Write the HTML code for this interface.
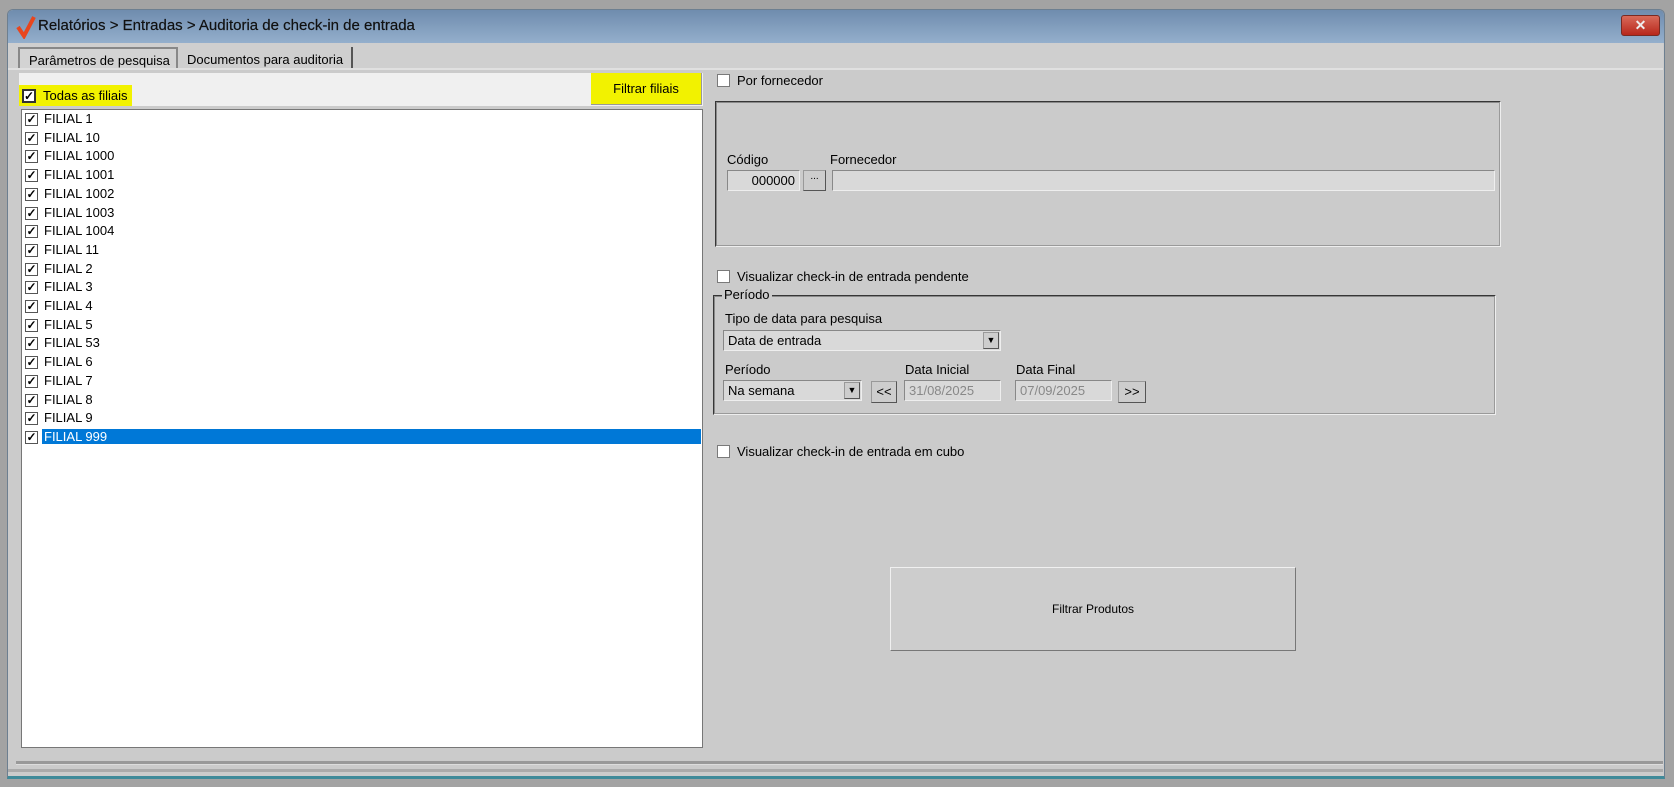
<!DOCTYPE html>
<html><head><meta charset="utf-8"><style>
*{box-sizing:border-box;margin:0;padding:0}
body{width:1674px;height:787px;background:#a3a3a3;position:relative;overflow:hidden;font-family:"Liberation Sans",sans-serif;font-size:13px;color:#000}
.a{position:absolute}
.win{left:7px;top:9px;width:1658px;height:770px;background:#cbcbcb;border:1px solid #6d7f90;border-radius:6px 6px 0 0;border-bottom:3px solid #3f8a99}
.title{left:8px;top:10px;width:1656px;height:33px;background:linear-gradient(#6f8cae,#94afcc);border-radius:5px 5px 0 0}
.cb{width:13px;height:13px;border:1px solid #7a7a7a;background:#fff}
.cbc{width:13px;height:13px;border:1px solid #555;background:#fff;font-size:12px;line-height:11px;text-align:center;font-weight:bold}
.in{border:1px solid #888;border-right-color:#eee;border-bottom-color:#eee;background:#d9d9d9;height:21px;padding:2px 4px;font-size:13px}
.btn{border:1px solid #999;border-right-color:#555;border-bottom-color:#555;background:#cdcdcd;text-align:center}
.grp{border:2px groove #eee;border-color:#8a8a8a #eee #eee #8a8a8a}
.row{position:absolute;left:22px;height:19px;width:679px}
.row span{position:absolute;left:20px;top:1px;padding:0 2px}
.row .cbc{position:absolute;left:3px;top:3px}
</style></head><body>
<div class="a win"></div>
<div class="a title"></div>
<svg class="a" style="left:16px;top:15px" width="20" height="24"><path d="M2 12 L8 21 L18 2" stroke="#e8461e" stroke-width="4" fill="none"/></svg>
<div class="a" style="left:38px;top:17px;font-size:15px;color:#111;-webkit-text-stroke:0.2px #111">Relatórios &gt; Entradas &gt; Auditoria de check-in de entrada</div>
<div class="a" style="left:1621px;top:15px;width:39px;height:21px;background:linear-gradient(#d86a5a,#b8271b);border:1px solid #7a2a22;border-radius:3px;color:#eee;text-align:center;font-weight:bold;line-height:19px;font-size:14px">✕</div>
<div class="a" style="left:8px;top:43px;width:1655px;height:25px;background:#cfcfcf"></div>
<div class="a" style="left:18px;top:47px;width:160px;height:22px;border:2px solid #888;border-bottom:none;background:#d3d3d3;font-size:13px;padding:4px 0 0 9px">Parâmetros de pesquisa</div>
<div class="a" style="left:181px;top:47px;width:172px;height:22px;border-right:2px solid #555;font-size:13px;padding:5px 0 0 6px">Documentos para auditoria</div>
<div class="a" style="left:8px;top:68px;width:1655px;height:2px;background:#e0e0e0"></div>
<div class="a" style="left:19px;top:73px;width:684px;height:33px;background:#f0f0f0"></div>
<div class="a" style="left:19px;top:85px;width:113px;height:21px;background:#f2f200"></div>
<div class="a cbc" style="left:22px;top:89px;border:2px solid #333;width:14px;height:14px">✓</div>
<div class="a" style="left:43px;top:88px">Todas as filiais</div>
<div class="a" style="left:591px;top:73px;width:111px;height:32px;background:#f2f200;border-bottom:1px solid #999;border-right:1px solid #999;text-align:center;line-height:31px">Filtrar filiais</div>
<div class="a" style="left:21px;top:109px;width:682px;height:639px;background:#fff;border:1px solid #777"></div>
<div id="l"></div>
<script>
var n=["1","10","1000","1001","1002","1003","1004","11","2","3","4","5","53","6","7","8","9","999"],h="";
n.forEach(function(x,i){var sel=i==17;h+='<div class="row" style="top:'+(110+i*18.7)+'px"><div class="cbc">✓</div><span style="'+(sel?'background:#0078d7;color:#fff;right:0':'')+'">FILIAL '+x+'</span></div>'});
document.getElementById('l').innerHTML=h;
</script>
<div class="a cb" style="left:717px;top:74px"></div>
<div class="a" style="left:737px;top:73px">Por fornecedor</div>
<div class="a grp" style="left:715px;top:101px;width:786px;height:146px"></div>
<div class="a" style="left:727px;top:152px">Código</div>
<div class="a in" style="left:727px;top:170px;width:73px;text-align:right">000000</div>
<div class="a btn" style="left:803px;top:170px;width:23px;height:21px;font-size:10px">...</div>
<div class="a" style="left:830px;top:152px">Fornecedor</div>
<div class="a in" style="left:832px;top:170px;width:663px"></div>
<div class="a cb" style="left:717px;top:270px"></div>
<div class="a" style="left:737px;top:269px">Visualizar check-in de entrada pendente</div>
<div class="a grp" style="left:713px;top:295px;width:783px;height:120px"></div>
<div class="a" style="left:722px;top:287px;background:#cbcbcb;padding:0 2px">Período</div>
<div class="a" style="left:725px;top:311px">Tipo de data para pesquisa</div>
<div class="a in" style="left:723px;top:330px;width:278px">Data de entrada</div>
<div class="a btn" style="left:983px;top:332px;width:16px;height:17px;font-size:9px;line-height:15px">▼</div>
<div class="a" style="left:725px;top:362px">Período</div>
<div class="a in" style="left:723px;top:380px;width:139px">Na semana</div>
<div class="a btn" style="left:844px;top:382px;width:16px;height:17px;font-size:9px;line-height:15px">▼</div>
<div class="a btn" style="left:871px;top:381px;width:26px;height:22px;line-height:20px">&lt;&lt;</div>
<div class="a" style="left:905px;top:362px">Data Inicial</div>
<div class="a in" style="left:904px;top:380px;width:97px;color:#888">31/08/2025</div>
<div class="a" style="left:1016px;top:362px">Data Final</div>
<div class="a in" style="left:1015px;top:380px;width:97px;color:#888">07/09/2025</div>
<div class="a btn" style="left:1118px;top:381px;width:28px;height:22px;line-height:20px">&gt;&gt;</div>
<div class="a cb" style="left:717px;top:445px"></div>
<div class="a" style="left:737px;top:444px">Visualizar check-in de entrada em cubo</div>
<div class="a btn" style="left:890px;top:567px;width:406px;height:84px;line-height:82px;border-color:#f0f0f0 #777 #777 #f0f0f0;font-size:12px">Filtrar Produtos</div>
<div class="a" style="left:16px;top:761px;width:1647px;height:4px;background:#999;border-bottom:1px solid #ddd"></div>
<div class="a" style="left:8px;top:769px;width:1655px;height:3px;background:#aaa"></div>
</body></html>
